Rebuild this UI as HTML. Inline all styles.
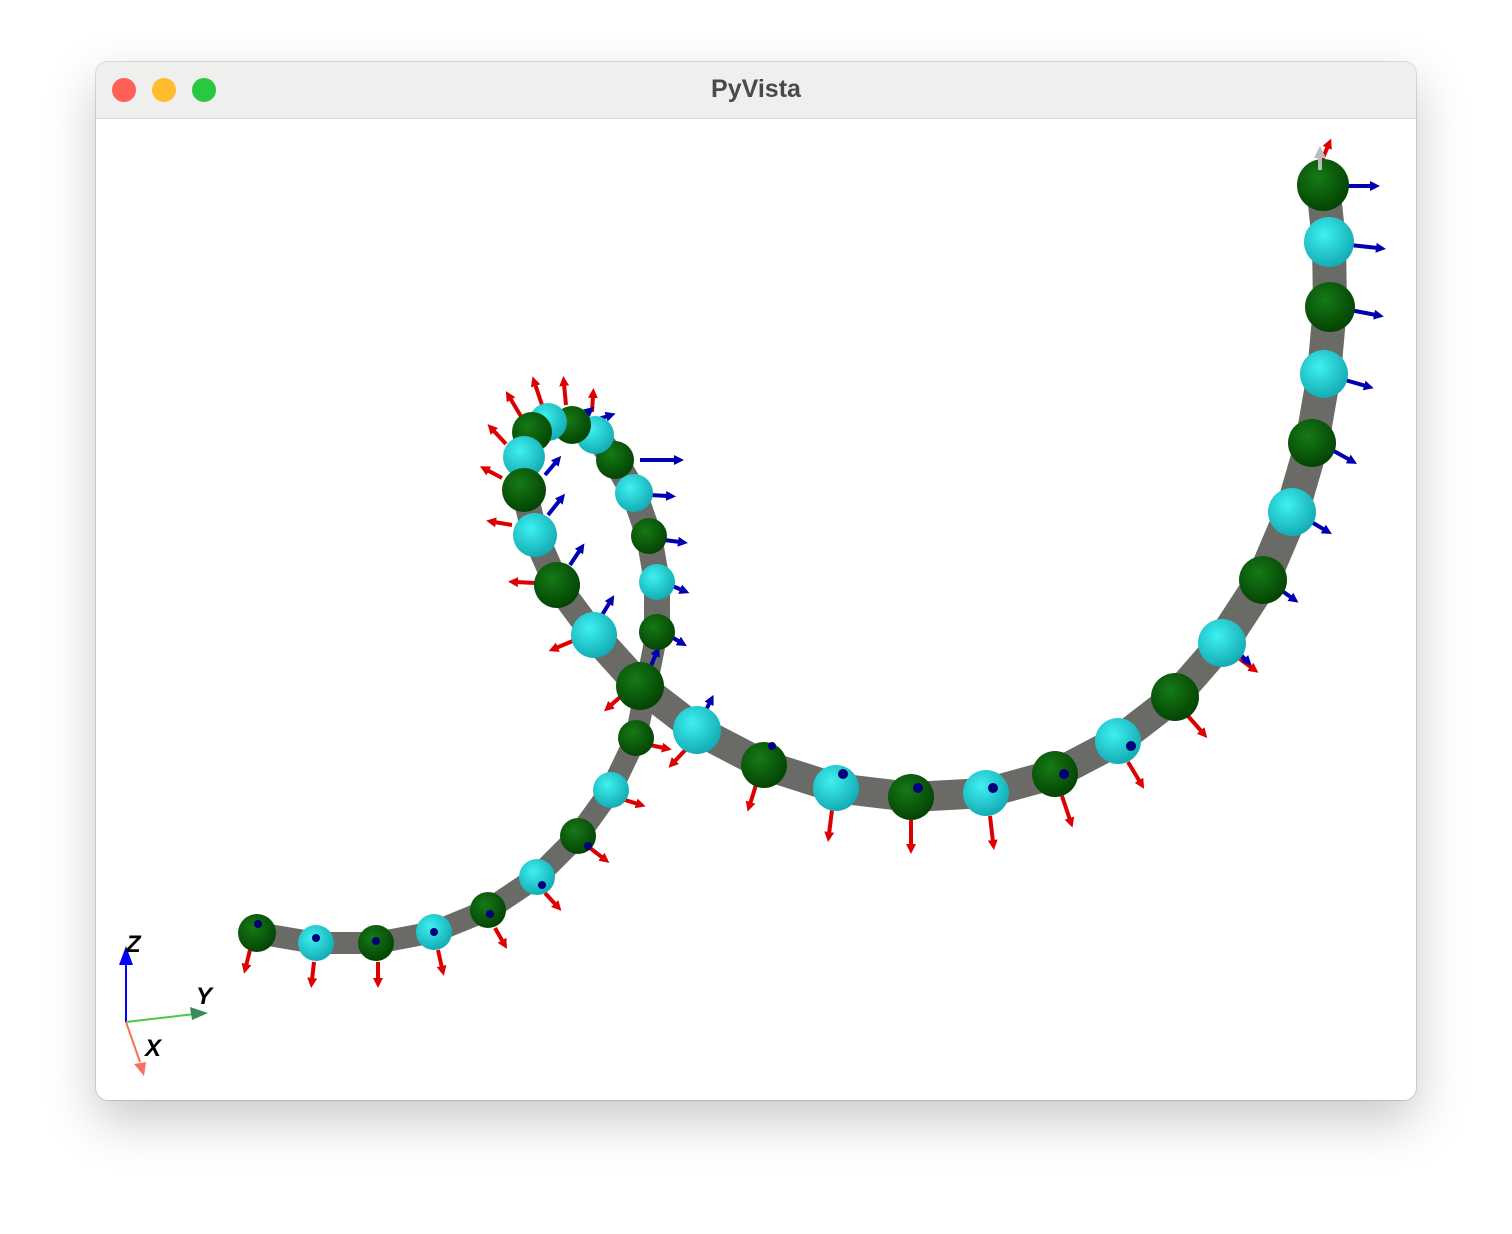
<!DOCTYPE html>
<html><head><meta charset="utf-8"><style>
html,body{margin:0;padding:0;background:#fff;width:1512px;height:1234px;overflow:hidden}
.win{position:absolute;left:96px;top:62px;width:1320px;height:1038px;border-radius:12px;background:#fff;box-shadow:0 20px 50px rgba(0,0,0,.22),0 0 0 1px rgba(0,0,0,.12);overflow:hidden}
.bar{height:56px;background:#efefee;border-bottom:1px solid #d8d8d8;position:relative}
.bar .t{position:absolute;left:0;right:0;top:13px;text-align:center;font:bold 25px "Liberation Sans",sans-serif;color:#4a4a4a}
.d{position:absolute;top:16px;width:24px;height:24px;border-radius:50%}
svg{position:absolute;left:0;top:0}
</style></head><body>
<div class="win"><div class="bar">
<div class="d" style="left:16px;background:#fe5f57"></div>
<div class="d" style="left:56px;background:#febc2e"></div>
<div class="d" style="left:96px;background:#28c840"></div>
<div class="t">PyVista</div></div></div>
<svg width="1512" height="1234" viewBox="0 0 1512 1234">
<defs>
<radialGradient id="g" cx="40%" cy="35%" r="70%"><stop offset="0" stop-color="#167a16"/><stop offset="1" stop-color="#024002"/></radialGradient>
<radialGradient id="c" cx="40%" cy="35%" r="70%"><stop offset="0" stop-color="#3ff0f0"/><stop offset="1" stop-color="#10a8b0"/></radialGradient>
<marker id="ar" viewBox="0 0 10 10" refX="2" refY="5" markerWidth="2.5" markerHeight="2.5" orient="auto"><path d="M0,0L10,5L0,10z" fill="#d00"/></marker>
<marker id="ab" viewBox="0 0 10 10" refX="2" refY="5" markerWidth="2.5" markerHeight="2.5" orient="auto"><path d="M0,0L10,5L0,10z" fill="#0000b0"/></marker>
</defs>
<g fill="none" stroke="#6a6a66" stroke-linejoin="round" stroke-linecap="round">
<polyline stroke-width="22" points="257,933 316,943 376,943 434,932 488,910 537,877 578,836 611,790 636,738 657,632"/>
<polyline stroke-width="26" points="657,632 657,582 649,536 634,493 615,460 595,435 572,425 548,422 532,432 524,457 524,490 535,535 557,585 594,635"/>
<polyline stroke-width="30" points="594,635 640,686 697,730 764,765 836,788 911,797 986,793 1055,774 1118,741 1175,697 1222,643"/>
<polyline stroke-width="34" points="1222,643 1263,580 1292,512 1312,443 1324,374 1330,307 1329,242 1323,185"/>
</g>
<g stroke="#d00" stroke-width="4" marker-end="url(#ar)">
<line x1="250" y1="950" x2="246" y2="966"/><line x1="314" y1="962" x2="312" y2="980"/><line x1="378" y1="962" x2="378" y2="980"/><line x1="438" y1="950" x2="442" y2="968"/><line x1="495" y1="928" x2="503" y2="942"/><line x1="545" y1="893" x2="556" y2="905"/><line x1="590" y1="848" x2="603" y2="858"/><line x1="625" y1="800" x2="638" y2="804"/><line x1="650" y1="745" x2="664" y2="748"/>
<line x1="690" y1="745" x2="674" y2="762"/><line x1="756" y1="785" x2="750" y2="804"/><line x1="832" y1="810" x2="829" y2="834"/><line x1="911" y1="820" x2="911" y2="846"/><line x1="990" y1="816" x2="993" y2="842"/><line x1="1062" y1="796" x2="1070" y2="820"/><line x1="1128" y1="762" x2="1140" y2="782"/><line x1="1188" y1="716" x2="1202" y2="732"/><line x1="1236" y1="656" x2="1252" y2="668"/>
<line x1="628" y1="690" x2="610" y2="706"/><line x1="575" y1="640" x2="556" y2="648"/><line x1="535" y1="583" x2="516" y2="582"/><line x1="512" y1="525" x2="494" y2="522"/><line x1="502" y1="478" x2="487" y2="470"/><line x1="506" y1="444" x2="493" y2="430"/><line x1="522" y1="418" x2="510" y2="398"/><line x1="542" y1="405" x2="535" y2="384"/><line x1="566" y1="405" x2="564" y2="384"/><line x1="592" y1="412" x2="593" y2="396"/><line x1="1322" y1="160" x2="1328" y2="146"/>
</g>
<g stroke="#0000b0" stroke-width="4" marker-end="url(#ab)">
<line x1="1345" y1="186" x2="1372" y2="186"/><line x1="1350" y1="245" x2="1378" y2="248"/><line x1="1350" y1="310" x2="1376" y2="315"/><line x1="1345" y1="380" x2="1366" y2="386"/><line x1="1332" y1="450" x2="1350" y2="460"/><line x1="1308" y1="520" x2="1325" y2="530"/><line x1="1278" y1="588" x2="1292" y2="598"/><line x1="1236" y1="650" x2="1246" y2="660"/>
<line x1="640" y1="460" x2="676" y2="460"/><line x1="650" y1="495" x2="668" y2="496"/><line x1="664" y1="540" x2="680" y2="542"/><line x1="670" y1="585" x2="682" y2="590"/><line x1="670" y1="636" x2="680" y2="642"/><line x1="650" y1="668" x2="656" y2="654"/><line x1="560" y1="435" x2="588" y2="412"/><line x1="580" y1="425" x2="608" y2="416"/><line x1="545" y1="475" x2="556" y2="462"/><line x1="548" y1="515" x2="560" y2="500"/><line x1="570" y1="565" x2="580" y2="550"/><line x1="602" y1="615" x2="610" y2="602"/><line x1="705" y1="712" x2="710" y2="702"/>
</g>
<g>
<circle cx="257" cy="933" r="19" fill="url(#g)"/><circle cx="316" cy="943" r="18" fill="url(#c)"/><circle cx="376" cy="943" r="18" fill="url(#g)"/><circle cx="434" cy="932" r="18" fill="url(#c)"/><circle cx="488" cy="910" r="18" fill="url(#g)"/><circle cx="537" cy="877" r="18" fill="url(#c)"/><circle cx="578" cy="836" r="18" fill="url(#g)"/><circle cx="611" cy="790" r="18" fill="url(#c)"/><circle cx="636" cy="738" r="18" fill="url(#g)"/>
<circle cx="657" cy="632" r="18" fill="url(#g)"/><circle cx="657" cy="582" r="18" fill="url(#c)"/><circle cx="649" cy="536" r="18" fill="url(#g)"/><circle cx="634" cy="493" r="19" fill="url(#c)"/><circle cx="615" cy="460" r="19" fill="url(#g)"/><circle cx="595" cy="435" r="19" fill="url(#c)"/><circle cx="572" cy="425" r="19" fill="url(#g)"/><circle cx="548" cy="422" r="19" fill="url(#c)"/><circle cx="532" cy="432" r="20" fill="url(#g)"/><circle cx="524" cy="457" r="21" fill="url(#c)"/><circle cx="524" cy="490" r="22" fill="url(#g)"/><circle cx="535" cy="535" r="22" fill="url(#c)"/><circle cx="557" cy="585" r="23" fill="url(#g)"/><circle cx="594" cy="635" r="23" fill="url(#c)"/><circle cx="640" cy="686" r="24" fill="url(#g)"/>
<circle cx="697" cy="730" r="24" fill="url(#c)"/><circle cx="764" cy="765" r="23" fill="url(#g)"/><circle cx="836" cy="788" r="23" fill="url(#c)"/><circle cx="911" cy="797" r="23" fill="url(#g)"/><circle cx="986" cy="793" r="23" fill="url(#c)"/><circle cx="1055" cy="774" r="23" fill="url(#g)"/><circle cx="1118" cy="741" r="23" fill="url(#c)"/><circle cx="1175" cy="697" r="24" fill="url(#g)"/><circle cx="1222" cy="643" r="24" fill="url(#c)"/><circle cx="1263" cy="580" r="24" fill="url(#g)"/><circle cx="1292" cy="512" r="24" fill="url(#c)"/><circle cx="1312" cy="443" r="24" fill="url(#g)"/><circle cx="1324" cy="374" r="24" fill="url(#c)"/><circle cx="1330" cy="307" r="25" fill="url(#g)"/><circle cx="1329" cy="242" r="25" fill="url(#c)"/><circle cx="1323" cy="185" r="26" fill="url(#g)"/>
</g>
<g fill="#00007a"><circle cx="258" cy="924" r="4"/><circle cx="316" cy="938" r="4"/><circle cx="376" cy="941" r="4"/><circle cx="434" cy="932" r="4"/><circle cx="490" cy="914" r="4"/><circle cx="542" cy="885" r="4"/><circle cx="588" cy="846" r="4"/><circle cx="772" cy="746" r="4"/><circle cx="843" cy="774" r="5"/><circle cx="918" cy="788" r="5"/><circle cx="993" cy="788" r="5"/><circle cx="1064" cy="774" r="5"/><circle cx="1131" cy="746" r="5"/></g>
<path d="M1318,170 L1318,158 L1314,158 L1320,146 L1326,158 L1322,158 L1322,170z" fill="#bbb"/>
<g font-family="Liberation Sans,sans-serif" font-weight="bold" font-style="italic" font-size="24" fill="#000">
<line x1="126" y1="1022" x2="126" y2="960" stroke="#00f" stroke-width="2"/><path d="M119,965 L126,946 L133,965z" fill="#00f"/>
<line x1="126" y1="1022" x2="195" y2="1014" stroke="#4c4" stroke-width="2"/><path d="M190,1007 L208,1013 L192,1020z" fill="#3a8a5a"/>
<line x1="126" y1="1022" x2="140" y2="1062" stroke="#f87050" stroke-width="2"/><path d="M134,1064 L146,1062 L144,1076z" fill="#f87060"/>
<text x="126" y="952">Z</text><text x="196" y="1004">Y</text><text x="145" y="1056">X</text>
</g>
</svg>
</body></html>
